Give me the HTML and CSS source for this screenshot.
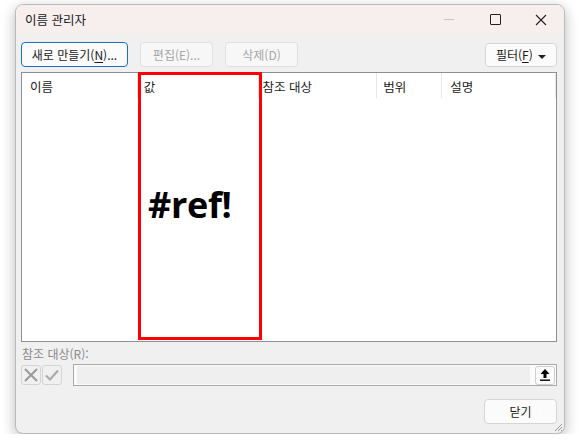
FILE: index.html
```html
<!DOCTYPE html>
<html lang="ko">
<head>
    <meta charset="UTF-8">
    <title>이름 관리자</title>
    <link rel="stylesheet" href="styles.css">
</head>
<body>
    <div class="window">
        <div class="titlebar">
            <span class="title">이름 관리자</span>
            <div class="controls">
                <span class="ctl min"></span>
                <span class="ctl max"><span class="box"></span></span>
                <span class="ctl close">
                    <svg width="12" height="12" viewBox="0 0 12 12"><path d="M1 1L11 11M11 1L1 11" stroke="#222" stroke-width="1.1"/></svg>
                </span>
            </div>
        </div>
        <div class="content">
            <div class="toolbar">
                <button class="btn primary">새로 만들기(<u>N</u>)...</button>
                <button class="btn disabled">편집(E)...</button>
                <button class="btn disabled">삭제(D)</button>
                <span class="spacer"></span>
                <button class="btn filter">필터(<u>F</u>) <span class="caret"></span></button>
            </div>
            <div class="list">
                <div class="list-head">
                    <div class="col c-name">이름</div>
                    <div class="col c-value">값</div>
                    <div class="col c-ref">참조 대상</div>
                    <div class="col c-scope">범위</div>
                    <div class="col c-desc">설명</div>
                </div>
                <div class="highlight">
                    <span class="ref-text">#ref!</span>
                </div>
            </div>
            <div class="ref-label">참조 대상(R):</div>
            <div class="ref-row">
                <span class="icon-btn">
                    <svg width="18" height="18" viewBox="0 0 18 18"><path d="M3 3L15 15M15 3L3 15" stroke="#9a9a9a" stroke-width="2"/></svg>
                </span>
                <span class="icon-btn">
                    <svg width="18" height="18" viewBox="0 0 18 18"><path d="M3 9.5L7 13.5L15 4.5" fill="none" stroke="#a8a8a8" stroke-width="2"/></svg>
                </span>
                <div class="ref-input">
                    <div class="ref-field"></div>
                    <span class="collapse-btn">
                        <svg width="12" height="14" viewBox="0 0 12 14"><path d="M6 1L1.5 6H4.5V10H7.5V6H10.5Z" fill="#000"/><rect x="1" y="11.5" width="10" height="1.4" fill="#000"/></svg>
                    </span>
                </div>
            </div>
            <div class="footer">
                <button class="btn close-btn">닫기</button>
            </div>
        </div>
        <svg class="grip" width="10" height="10" viewBox="0 0 10 10"><path d="M9 2L2 9M9 5L5 9M9 8L8 9" stroke="#999" stroke-width="1"/></svg>
    </div>
</body>
</html>
```

FILE: styles.css
```css
body {
    margin: 0;
    background: #ffffff;
    font-family: "Noto Sans CJK KR", "Noto Sans", sans-serif;
    font-size: 12px;
    color: #1a1a1a;
}
.window {
    position: relative;
    margin: 4px 0 0 15px;
    width: 550px;
    height: 430px;
    box-sizing: border-box;
    border: 1px solid #b9b9b9;
    border-radius: 8px;
    background: #f0f0f0;
    box-shadow: 0 4px 14px rgba(0, 0, 0, 0.28);
    overflow: hidden;
    display: flex;
    flex-direction: column;
}
.titlebar {
    height: 29px;
    background: #f6efee;
    display: flex;
    align-items: center;
    padding-left: 9px;
}
.title {
    font-size: 12.5px;
    color: #1a1a1a;
}
.controls {
    margin-left: auto;
    display: flex;
    height: 100%;
}
.ctl {
    width: 46px;
    display: flex;
    align-items: center;
    justify-content: center;
}
.min::before {
    content: "";
    width: 10px;
    height: 1px;
    background: #c8c4c4;
}
.box {
    width: 9px;
    height: 9px;
    border: 1px solid #222;
    border-radius: 1px;
}
.content {
    flex: 1;
    display: flex;
    flex-direction: column;
    padding: 8px 7px 0 5px;
}
.toolbar {
    display: flex;
    gap: 12px;
    height: 25px;
}
.spacer {
    flex: 1;
}
.btn {
    font-family: "Noto Sans CJK KR", "Noto Sans", sans-serif;
    font-size: 12px;
    height: 25px;
    padding: 0;
    background: #fbfbfb;
    border: 1px solid #d5d5d5;
    border-radius: 4px;
    color: #1a1a1a;
    line-height: 1;
}
.btn u {
    text-underline-offset: 2px;
}
.primary {
    width: 107px;
    border-color: #1a6fc0;
}
.disabled {
    width: 73px;
    color: #a6a6a6;
    background: #f7f7f7;
    border-color: #e0e0e0;
}
.filter {
    width: 72px;
    margin-top: 1px;
    height: 24px;
}
.caret {
    display: inline-block;
    width: 0;
    height: 0;
    border-left: 4px solid transparent;
    border-right: 4px solid transparent;
    border-top: 4px solid #222;
    vertical-align: middle;
    margin-left: 2px;
}
.list {
    position: relative;
    margin-top: 5px;
    height: 268px;
    background: #ffffff;
    border: 1px solid #8f8f9a;
}
.list-head {
    display: flex;
    height: 26px;
}
.col {
    border-right: 1px solid #e6e6e6;
    padding: 4px 0 0 8px;
    font-size: 12.5px;
    box-sizing: border-box;
    height: 25px;
}
.c-name { width: 116px; }
.c-value { width: 121px; padding-left: 6px; }
.c-ref { width: 119px; padding-left: 4px; }
.c-scope { width: 65px; padding-left: 6px; }
.c-desc { width: 114px; }
.highlight {
    position: absolute;
    left: 116px;
    top: -1px;
    width: 124px;
    height: 268px;
    box-sizing: border-box;
    border: 3px solid #ff0000;
    display: flex;
    align-items: center;
}
.ref-text {
    font-family: "Open Sans", "Noto Sans", sans-serif;
    font-weight: 700;
    font-size: 36px;
    color: #000;
    margin-left: 7px;
    margin-top: -4px;
    letter-spacing: -0.3px;
}
.ref-label {
    margin-top: 3px;
    color: #8a8a8a;
    font-size: 12px;
    padding-left: 1px;
}
.ref-row {
    display: flex;
    align-items: center;
    margin-top: 2px;
    gap: 1px;
}
.icon-btn {
    width: 18px;
    height: 18px;
    border: 1px solid #d4d4d4;
    border-radius: 3px;
    display: flex;
    align-items: center;
    justify-content: center;
}
.ref-input {
    margin-left: 10px;
    flex: 1;
    height: 22px;
    box-sizing: border-box;
    border: 1px solid #a8a8ad;
    display: flex;
    align-items: center;
    padding: 0 1px 0 3px;
    background: #fbfbfb;
}
.ref-field {
    flex: 1;
    height: 18px;
    background: #efefef;
}
.collapse-btn {
    margin-left: 5px;
    width: 20px;
    height: 19px;
    box-sizing: border-box;
    border: 1px solid #cfcfcf;
    border-radius: 3px;
    background: #fbfbfb;
    display: flex;
    align-items: center;
    justify-content: center;
}
.footer {
    display: flex;
    justify-content: flex-end;
    margin-top: 13px;
}
.close-btn {
    width: 73px;
    height: 25px;
}
.grip {
    position: absolute;
    right: 1px;
    bottom: 1px;
}
```
